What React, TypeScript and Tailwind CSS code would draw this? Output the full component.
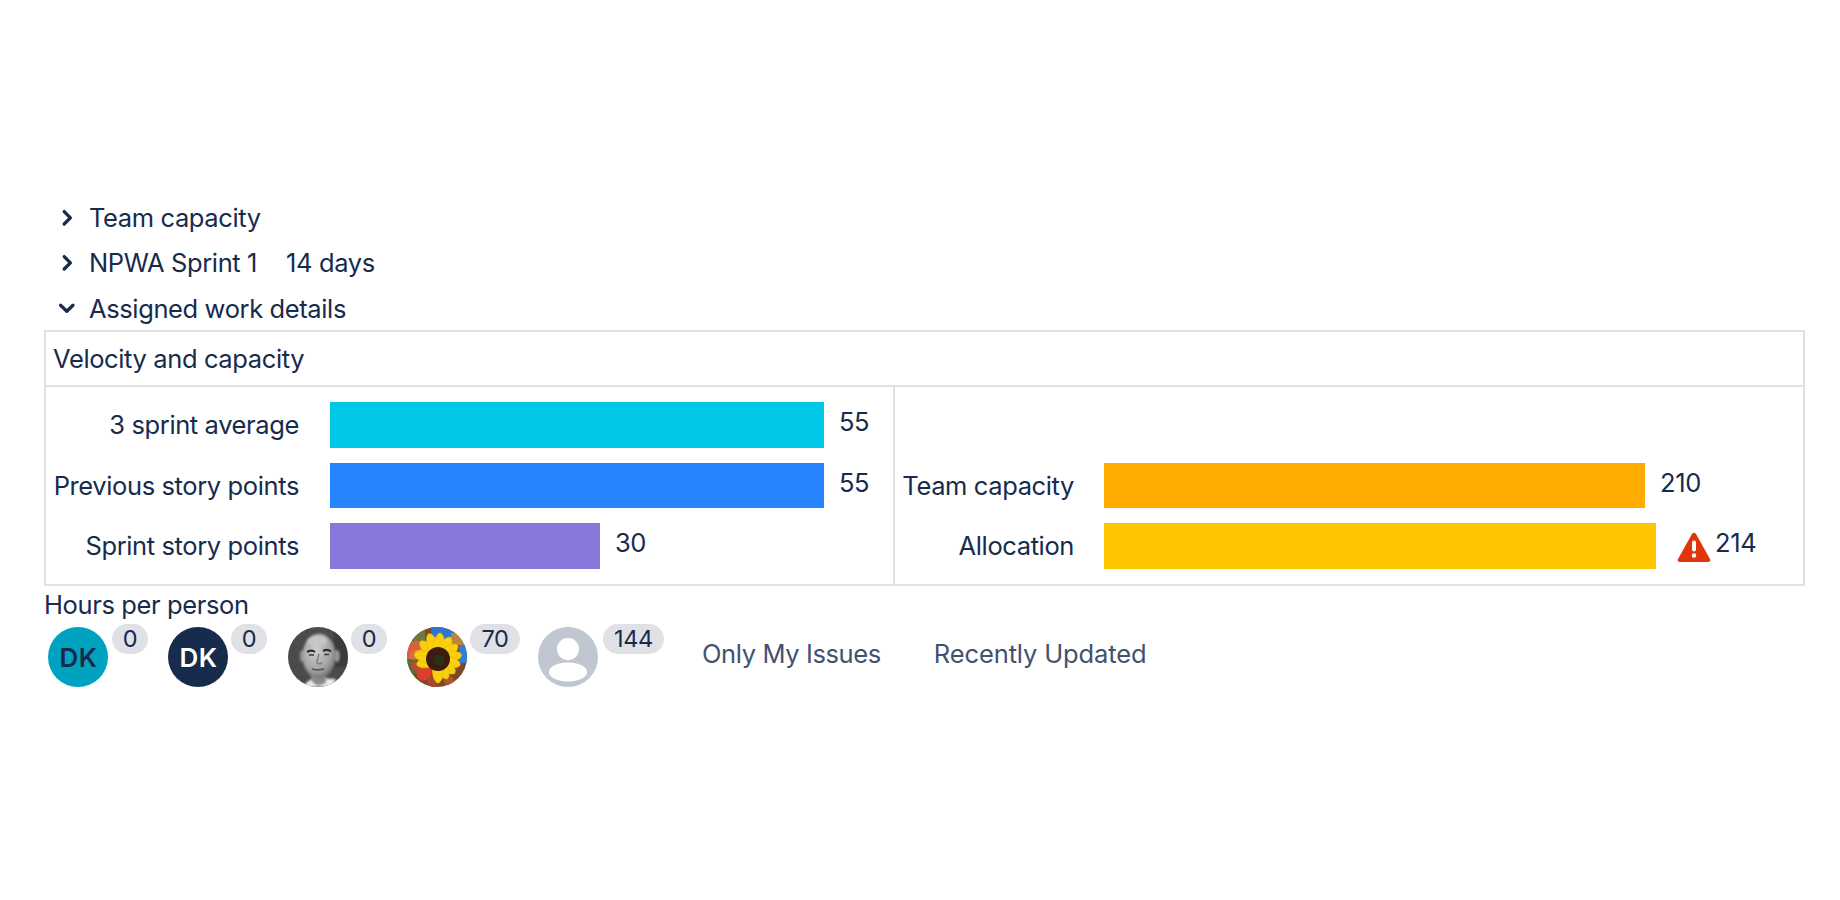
import React from 'react';

interface BarRow {
  label: string;
  value: string;
  barClass: string;
  warn?: boolean;
}

const velocityRows: BarRow[] = [
  { label: '3 sprint average', value: '55', barClass: 'w-[494px] bg-[#00c7e6]' },
  { label: 'Previous story points', value: '55', barClass: 'w-[494px] bg-[#2684ff]' },
  { label: 'Sprint story points', value: '30', barClass: 'w-[270px] bg-[#8777d9]' },
];

const capacityRows: BarRow[] = [
  { label: 'Team capacity', value: '210', barClass: 'w-[541px] bg-[#ffab00]' },
  { label: 'Allocation', value: '214', barClass: 'w-[552px] bg-[#ffc400]', warn: true },
];

function ChevronRight() {
  return (
    <svg width="24" height="24" viewBox="0 0 24 24" fill="none">
      <path d="M9.2 5.6 15.4 11.8 9.2 18" stroke="#172b4d" strokeWidth="3.3" strokeLinecap="round" strokeLinejoin="round" />
    </svg>
  );
}

function ChevronDown() {
  return (
    <svg width="24" height="24" viewBox="0 0 24 24" fill="none">
      <path d="M5.6 9.2 11.8 15.2 18 9.2" stroke="#172b4d" strokeWidth="3.3" strokeLinecap="round" strokeLinejoin="round" />
    </svg>
  );
}

function WarningIcon() {
  return (
    <svg width="34" height="30" viewBox="0 0 34 30">
      <path d="M15 2 1 27c-.8 1.5.1 3 1.8 3h28.4c1.7 0 2.6-1.5 1.8-3L19 2c-.9-1.6-3.1-1.6-4 0Z" fill="#de350b" />
      <rect x="15" y="8.5" width="4" height="11" rx="2" fill="#fff" />
      <circle cx="17" cy="23.5" r="2.2" fill="#fff" />
    </svg>
  );
}

function PortraitAvatar() {
  return (
    <svg width="60" height="60" viewBox="0 0 60 60" className="rounded-full">
      <defs>
        <filter id="pb"><feGaussianBlur stdDeviation="1.1" /></filter>
        <filter id="pb2"><feGaussianBlur stdDeviation="0.7" /></filter>
        <radialGradient id="skin" cx="0.42" cy="0.38" r="0.7">
          <stop offset="0" stopColor="#cfcfcf" />
          <stop offset="0.65" stopColor="#a2a2a2" />
          <stop offset="1" stopColor="#5f5f5f" />
        </radialGradient>
      </defs>
      <rect width="60" height="60" fill="#4b4b4b" />
      <g filter="url(#pb)">
        <path d="M46 0h14v40H46Z" fill="#3b3b3b" />
        <path d="M16 60c2-6 8-9 14-9l18 1-4 8Z" fill="#ececec" />
        <path d="M22 46h16v10l-8 3-6-4Z" fill="#8a8a8a" />
        <ellipse cx="14" cy="29" rx="2.4" ry="6" fill="#8c8c8c" />
        <ellipse cx="49" cy="29" rx="2.4" ry="6" fill="#9a9a9a" />
        <ellipse cx="31" cy="29" rx="16.5" ry="22.5" fill="url(#skin)" />
        <ellipse cx="29" cy="14" rx="10" ry="5" fill="#c6c6c6" />
      </g>
      <g filter="url(#pb2)">
        <path d="M19 25c3-1.6 6-1.6 8 0M35 24c3-1.6 6-1 8 .6" stroke="#2f2f2f" strokeWidth="2.2" fill="none" />
        <path d="M21 28h5M36 27.5h5" stroke="#3a3a3a" strokeWidth="1.4" />
        <path d="M31 27c-1 4-2 7-2 9 1 1 3 1 5 0" stroke="#7c7c7c" strokeWidth="1.5" fill="none" />
        <path d="M24 42c3 1 8 1 12-.4" stroke="#5a5a5a" strokeWidth="1.8" fill="none" />
      </g>
    </svg>
  );
}

function SunflowerAvatar() {
  const petals: [number, number][] = [
    [-75, 24], [-45, 25], [-20, 27], [5, 26], [30, 25], [55, 24], [80, 24],
    [105, 23], [130, 22], [155, 22], [180, 24], [255, 22], [280, 24],
  ];
  return (
    <svg width="60" height="60" viewBox="0 0 60 60" className="rounded-full">
      <defs>
        <filter id="sb"><feGaussianBlur stdDeviation="0.5" /></filter>
      </defs>
      <rect width="60" height="60" fill="#7c4a28" />
      <g filter="url(#sb)">
        <path d="M24 0h30v12H24Z" fill="#2f74d0" />
        <path d="M44 6h16v12H44Z" fill="#b8863f" />
        <path d="M52 18h8v18h-8Z" fill="#2f7fd8" />
        <path d="M0 0h18v14H0Z" fill="#6f7a3c" />
        <path d="M0 14h14v18H0Z" fill="#d9603a" />
        <path d="M0 32h10v14H0Z" fill="#55713a" />
        <circle cx="7" cy="28" r="5" fill="#e06a45" />
        <circle cx="17" cy="46" r="7.5" fill="#da3f2c" />
        <circle cx="9" cy="39" r="4.5" fill="#c8452f" />
        <circle cx="26" cy="55" r="6" fill="#a5472a" />
        <circle cx="42" cy="54" r="5" fill="#b0552c" />
        <g transform="translate(31 32)">
          {petals.map(([a, len]) => (
            <path key={a} d={`M-5.5 -7C-7 -${len - 8} -3 -${len} 0 -${len}C3 -${len} 7 -${len - 8} 5.5 -7Z`} fill="#f9d00c" stroke="#e8ad08" strokeWidth="0.5" transform={`rotate(${a})`} />
          ))}
        </g>
        <circle cx="31" cy="32" r="12" fill="#3c1a0b" />
        <circle cx="32" cy="33" r="5.5" fill="#2b3216" />
      </g>
    </svg>
  );
}

function DefaultAvatar() {
  return (
    <svg width="60" height="60" viewBox="0 0 60 60">
      <circle cx="30" cy="30" r="30" fill="#c1c7d0" />
      <circle cx="30" cy="22" r="11" fill="#fff" />
      <ellipse cx="30" cy="45" rx="19" ry="9.5" fill="#fff" />
    </svg>
  );
}

function Badge({ children, className }: { children: React.ReactNode; className: string }) {
  return (
    <span className={`h-[30px] rounded-full bg-[#dfe1e6] flex items-center justify-center text-[23.5px] leading-none ${className}`}>
      {children}
    </span>
  );
}

function Row({ row, labelClass, gapClass }: { row: BarRow; labelClass: string; gapClass: string }) {
  return (
    <div className="flex items-center h-[45.5px]">
      <span className={`text-right whitespace-nowrap pt-[1px] ${labelClass}`}>{row.label}</span>
      <div className={`h-[45.5px] ${gapClass} ${row.barClass}`} />
      {row.warn && (
        <span className="ml-[21px] mt-[2px] flex">
          <WarningIcon />
        </span>
      )}
      <span className={`pb-[5px] ${row.warn ? 'ml-[4px]' : 'ml-[15px]'}`}>{row.value}</span>
    </div>
  );
}

export default function App() {
  return (
    <div className="w-[1840px] h-[900px] bg-white overflow-hidden pt-[195.5px] pl-[44px] pr-[35px] text-[#172b4d] text-[25.5px] tracking-[-0.015em] [font-family:Inter,sans-serif]">
      <div className="flex items-center h-[45px] pl-[11px] gap-[10px]">
        <ChevronRight />
        <span>Team capacity</span>
      </div>
      <div className="flex items-center h-[45px] pl-[11px] gap-[10px]">
        <ChevronRight />
        <span>NPWA Sprint 1</span>
        <span className="ml-[19px]">14 days</span>
      </div>
      <div className="flex items-center h-[44.5px] pl-[11px] gap-[10px]">
        <ChevronDown />
        <span className="pt-[3px]">Assigned work details</span>
      </div>

      <div className="border-2 border-[#dfe1e6] h-[256px] flex flex-col">
        <div className="h-[55px] shrink-0 border-b-2 border-[#dfe1e6] flex items-center pl-[7px] pt-[2px]">
          Velocity and capacity
        </div>
        <div className="flex flex-1">
          <div className="w-[849px] border-r-2 border-[#dfe1e6] pt-[15px] flex flex-col gap-[15px]">
            {velocityRows.map((r) => (
              <Row key={r.label} row={r} labelClass="w-[253px]" gapClass="ml-[31px]" />
            ))}
          </div>
          <div className="flex-1 pt-[15px] flex flex-col gap-[15px]">
            <div className="h-[45.5px]" />
            {capacityRows.map((r) => (
              <Row key={r.label} row={r} labelClass="w-[179px]" gapClass="ml-[30px]" />
            ))}
          </div>
        </div>
      </div>

      <div className="h-[37px] pt-[2px] flex items-center">Hours per person</div>

      <div className="flex items-start pl-[4px] pt-[1px]">
        <span className="w-[60px] h-[60px] mt-[3px] rounded-full bg-[#00a3bf] flex items-center justify-center font-semibold text-[26px] tracking-[0.02em] pl-[1px] text-[#172b4d]">DK</span>
        <Badge className="w-[36px] ml-[4px]">0</Badge>
        <span className="w-[60px] h-[60px] mt-[3px] ml-[20px] rounded-full bg-[#172b4d] flex items-center justify-center font-semibold text-[26px] tracking-[0.02em] pl-[1px] text-white">DK</span>
        <Badge className="w-[36px] ml-[3px]">0</Badge>
        <span className="mt-[3px] ml-[21px] flex">
          <PortraitAvatar />
        </span>
        <Badge className="w-[36px] ml-[3px]">0</Badge>
        <span className="mt-[3px] ml-[20px] flex">
          <SunflowerAvatar />
        </span>
        <Badge className="w-[50px] ml-[3px]">70</Badge>
        <span className="mt-[3px] ml-[18px] flex">
          <DefaultAvatar />
        </span>
        <Badge className="w-[61px] ml-[5px]">144</Badge>
        <span className="mt-[11px] ml-[38px] text-[#42526e]">Only My Issues</span>
        <span className="mt-[11px] ml-[53px] text-[#42526e] tracking-[-0.005em]">Recently Updated</span>
      </div>
    </div>
  );
}
